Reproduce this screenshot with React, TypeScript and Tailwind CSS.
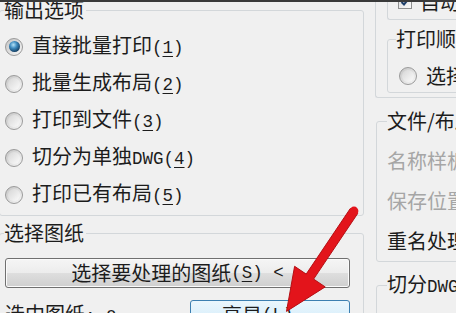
import React from "react";

function M({ children }: { children: React.ReactNode }) {
  return <span className="font-['Liberation_Mono',monospace] text-[17.5px]">{children}</span>;
}

function U({ children }: { children: React.ReactNode }) {
  return <span className="underline decoration-1 underline-offset-[3px]">{children}</span>;
}

function Radio({ checked }: { checked?: boolean }) {
  return (
    <span className="flex h-[18px] w-[18px] shrink-0 items-center justify-center rounded-full border border-[#9a9a9a] bg-[linear-gradient(135deg,#c4c4c4,#f8f8f8)]">
      {checked ? (
        <span className="h-[11px] w-[11px] rounded-full bg-[radial-gradient(circle_at_40%_35%,#b4e2f7_0%,#3f8cc0_35%,#143e62_75%)]" />
      ) : (
        <span className="h-[12px] w-[12px] rounded-full bg-[linear-gradient(135deg,#d6d6d6,#fbfbfb)]" />
      )}
    </span>
  );
}

function RadioRow({ checked, children, h }: { checked?: boolean; children: React.ReactNode; h: string }) {
  return (
    <div className={`flex items-center gap-[9px] whitespace-nowrap ${h}`}>
      <Radio checked={checked} />
      <span>{children}</span>
    </div>
  );
}

export default function App() {
  return (
    <div className="relative h-[313px] w-[456px] overflow-hidden bg-[#f0f0f0] font-['Noto_Sans_CJK_SC','Noto_Sans',sans-serif] text-[20px] leading-[20px] text-[#1c1c1c]">
      <div className="absolute inset-x-0 top-0 z-10 h-[2px] bg-[#3a3a3a]" />

      <div className="flex">
        {/* left column */}
        <div className="-ml-[1px] flex w-[365px] shrink-0 flex-col">
          <fieldset className="h-[216px] rounded-[3px] border border-[#d3d7da] pl-[4px]">
            <legend className="pr-[2px] leading-[20px]">输出选项</legend>
            <div className="ml-[1px] mt-[8px] flex flex-col">
              <RadioRow checked h="h-[37px]">
                直接批量打印<M>(<U>1</U>)</M>
              </RadioRow>
              <RadioRow h="h-[37px]">
                批量生成布局<M>(<U>2</U>)</M>
              </RadioRow>
              <RadioRow h="h-[37px]">
                打印到文件<M>(<U>3</U>)</M>
              </RadioRow>
              <RadioRow h="h-[37px]">
                切分为单独<M>DWG(<U>4</U>)</M>
              </RadioRow>
              <RadioRow h="h-[37px]">
                打印已有布局<M>(<U>5</U>)</M>
              </RadioRow>
            </div>
          </fieldset>

          <fieldset className="mt-[7px] h-[120px] rounded-[3px] border border-[#d3d7da] pl-[4px]">
            <legend className="pr-[2px] leading-[20px]">选择图纸</legend>
            <div className="ml-[1px] mt-[15px] flex h-[30px] w-[345px] items-center justify-center whitespace-nowrap rounded-[3px] border border-[#707070] bg-[linear-gradient(#f5f5f5_0%,#ececec_50%,#dedede_51%,#cfcfcf_100%)] shadow-[inset_0_0_0_1px_#fbfbfb]">
              选择要处理的图纸<M>(<U>S</U>) &lt;</M>
            </div>
            <div className="ml-[1px] mt-[12px] flex h-[30px] items-center whitespace-nowrap">
              <span className="w-[185px]">
                选中图纸<M>: 0</M>
              </span>
              <div className="flex h-[30px] w-[160px] items-center rounded-[3px] border border-[#3c7fb1] bg-[linear-gradient(#eaf6fd_0%,#dcf0fb_50%,#bee6fd_51%,#a7d9f5_100%)] pl-[31px]">
                亮显<M>(<U>L</U>)...</M>
              </div>
            </div>
          </fieldset>
        </div>

        {/* right column */}
        <div className="ml-[11px] flex w-[140px] shrink-0 flex-col whitespace-nowrap">
          <div className="flex flex-col rounded-bl-[3px] border-b border-l border-[#d3d7da] pb-[4px] pl-[11px]">
            <div className="flex h-[20px] flex-col rounded-bl-[3px] border-b border-l border-[#d3d7da] pl-[10px]">
              <div className="-mt-[8px] flex items-center gap-[8px]">
                <span className="flex h-[14px] w-[14px] shrink-0 items-center justify-center border border-[#8e8f8f] bg-[linear-gradient(135deg,#dcdcdc,#fafafa)]">
                  <svg width="10" height="10" viewBox="0 0 10 10">
                    <path d="M1.5 5 L4 7.5 L8.5 2" fill="none" stroke="#1f3f6a" strokeWidth="2" />
                  </svg>
                </span>
                <span>自动旋转</span>
              </div>
            </div>
            <fieldset className="mt-[9px] rounded-[3px] border border-[#d3d7da] pl-[8px]">
              <legend className="pr-[2px] leading-[20px]">打印顺序</legend>
              <div className="ml-[3px] mt-[11px]">
                <RadioRow h="h-[32px]">选择顺序</RadioRow>
              </div>
            </fieldset>
          </div>

          <fieldset className="ml-[1px] mt-[13px] rounded-[3px] border border-[#d3d7da] pl-[10px]">
            <legend className="pr-[2px] leading-[20px]">文件/布局</legend>
            <div className="mt-[10px] flex flex-col">
              <div className="flex h-[40px] items-center text-[#a6a6a6]">名称样板</div>
              <div className="flex h-[40px] items-center text-[#a6a6a6]">保存位置</div>
              <div className="flex h-[40px] items-center">重名处理</div>
            </div>
          </fieldset>

          <fieldset className="ml-[1px] mt-[12px] rounded-[3px] border border-[#d3d7da] pl-[10px]">
            <legend className="pr-[2px] leading-[20px]">
              切分<M>DWG</M>设置
            </legend>
            <div className="ml-[1px] mt-[10px]">
              <RadioRow h="h-[32px]">支持布局</RadioRow>
            </div>
          </fieldset>
        </div>
      </div>

      <svg className="pointer-events-none absolute left-0 top-0 z-20" width="456" height="313" viewBox="0 0 456 313">
        <polygon
          points="350.3,208.5 306.2,274.1 294.6,266.3 286.5,311.4 325.2,286.9 313.6,279.1 357.7,213.5"
          fill="#e3141b"
          stroke="#b50f14"
          strokeWidth="1"
          strokeLinejoin="round"
        />
        <circle cx="354" cy="211" r="4.4" fill="#e3141b" />
      </svg>
    </div>
  );
}
